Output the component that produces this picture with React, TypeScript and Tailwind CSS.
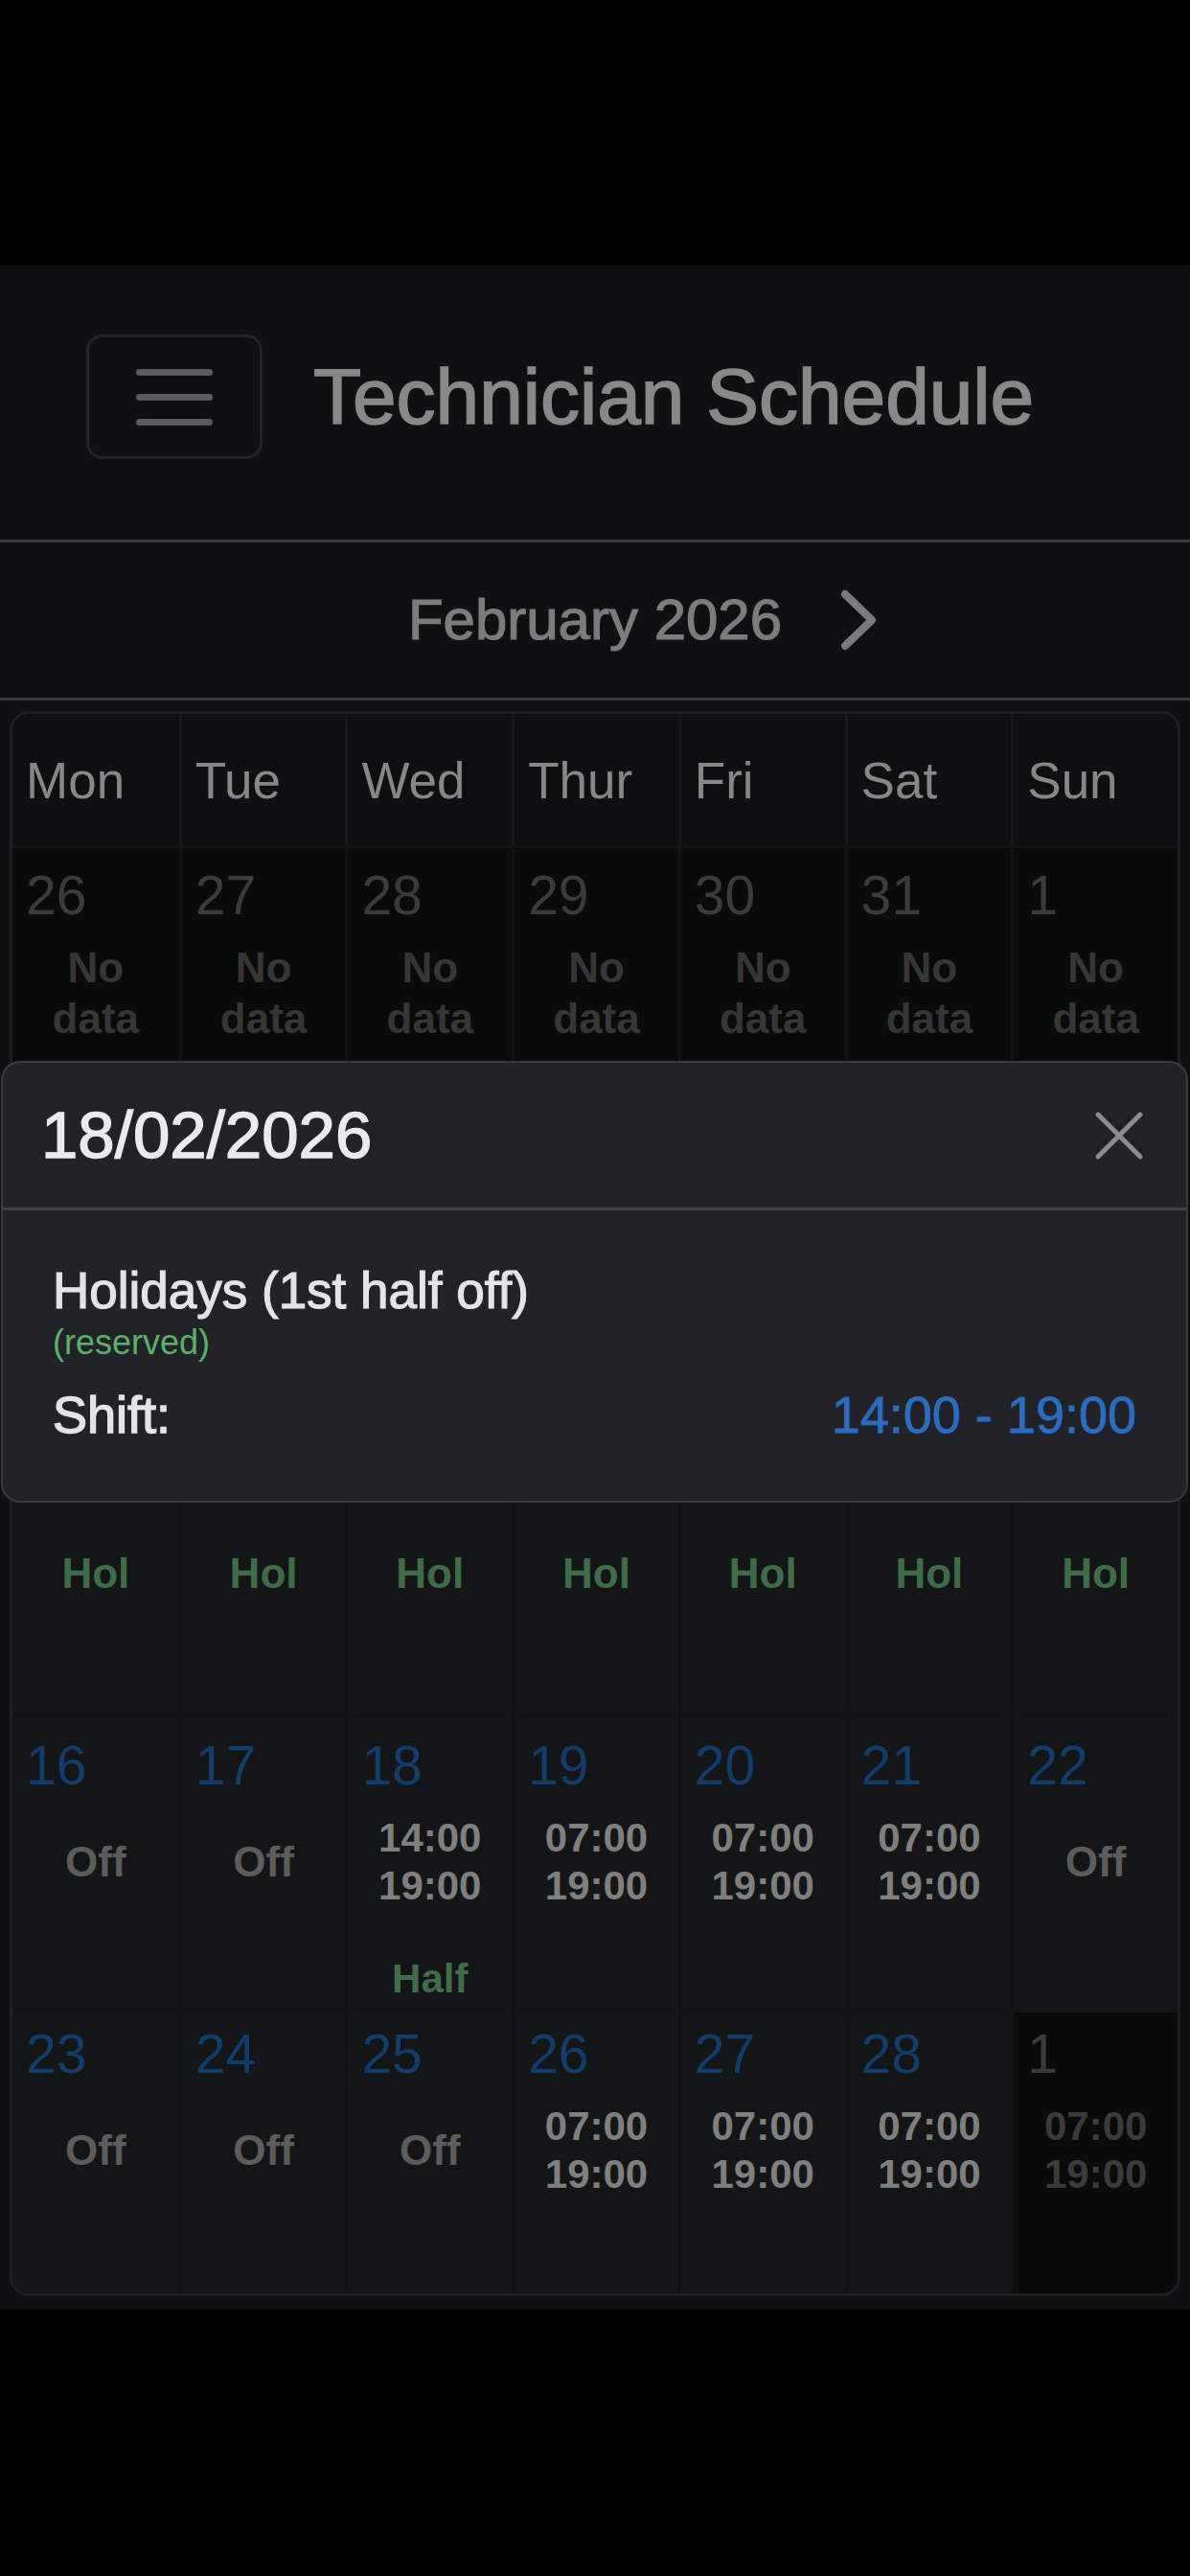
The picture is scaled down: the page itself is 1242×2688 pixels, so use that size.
import clsx from 'clsx';

type Kind = 'nodata' | 'off' | 'hol' | 'time';

interface Cell {
  day: number;
  out?: boolean;
  kind: Kind;
  start?: string;
  end?: string;
  half?: boolean;
}

interface Week {
  h: string;
  pt: string;
  cells: Cell[];
}

const dayNames = ['Mon', 'Tue', 'Wed', 'Thur', 'Fri', 'Sat', 'Sun'];

const day = (d: number, start = '07:00', end = '19:00'): Cell => ({ day: d, kind: 'time', start, end });

const weeks: Week[] = [
  {
    h: 'h-[233px]',
    pt: 'pt-[16px]',
    cells: [26, 27, 28, 29, 30, 31, 1].map((d) => ({ day: d, out: true, kind: 'nodata' as Kind })),
  },
  {
    h: 'h-[374px]',
    pt: 'pt-[16px]',
    cells: [day(2), day(3), day(4), day(5), day(6), { day: 7, kind: 'off' }, { day: 8, kind: 'off' }],
  },
  {
    h: 'h-[299px]',
    pt: 'pt-[16px]',
    cells: [9, 10, 11, 12, 13, 14, 15].map((d) => ({ day: d, kind: 'hol' as Kind })),
  },
  {
    h: 'h-[309px]',
    pt: 'pt-[18px]',
    cells: [
      { day: 16, kind: 'off' },
      { day: 17, kind: 'off' },
      { ...day(18, '14:00'), half: true },
      day(19),
      day(20),
      day(21),
      { day: 22, kind: 'off' },
    ],
  },
  {
    h: 'h-[296px]',
    pt: 'pt-[10px]',
    cells: [
      { day: 23, kind: 'off' },
      { day: 24, kind: 'off' },
      { day: 25, kind: 'off' },
      day(26),
      day(27),
      day(28),
      { ...day(1), out: true },
    ],
  },
];

function DayCell({ cell, first, pt }: { cell: Cell; first: boolean; pt: string }) {
  return (
    <div
      className={clsx(
        'flex flex-col px-[14px]',
        pt,
        !first && 'border-l-[3px] border-[#101113]',
        cell.out ? 'bg-[#090a0a]' : 'bg-[#141517]'
      )}
    >
      <div className={clsx('text-[57px] leading-[66px]', cell.out ? 'text-[#3b3b3b]' : 'text-[#123c6a]')}>
        {cell.day}
      </div>

      {cell.kind === 'nodata' && (
        <div className="mt-[16px] text-center text-[44px] leading-[53px] font-bold text-[#363636]">No data</div>
      )}

      {cell.kind !== 'nodata' && (
        <div className="mt-[18px] flex h-[100px] flex-col items-center justify-center font-bold">
          {cell.kind === 'time' && (
            <div className={clsx('text-center text-[42px] leading-[50px]', cell.out ? 'text-[#3b3b3b]' : 'text-[#7f7f7f]')}>
              <div>{cell.start}</div>
              <div>{cell.end}</div>
            </div>
          )}
          {cell.kind === 'off' && <div className="text-[44px] leading-[50px] text-[#5c5c5c]">Off</div>}
          {cell.kind === 'hol' && <div className="text-[44px] leading-[50px] text-[#3f6c48]">Hol</div>}
        </div>
      )}

      {cell.half && (
        <div className="mt-[47px] text-center text-[42px] leading-[50px] font-bold text-[#3f6d49]">Half</div>
      )}
    </div>
  );
}

function Chevron({ hidden }: { hidden?: boolean }) {
  return (
    <svg width="40" height="66" viewBox="0 0 40 66" className={clsx('shrink-0', hidden && 'invisible')}>
      <path d="M6 6 L34 33 L6 60" fill="none" stroke="#7a7a7c" strokeWidth="8" strokeLinecap="round" strokeLinejoin="round" />
    </svg>
  );
}

export default function App() {
  return (
    <div className="relative min-h-[2688px] bg-black font-['Liberation_Sans',Arial,sans-serif]">
      <div className="h-[277px] bg-black" />

      <div className="bg-[#0f1012] pb-[14px]">
        {/* navbar */}
        <header className="flex items-center border-b-[3px] border-[#3a3b3d] pt-[72px] pb-[84px] pl-[90px]">
          <button className="flex h-[130px] w-[184px] flex-col items-center justify-center gap-[19px] rounded-[17px] border-[3px] border-[#232426]">
            <span className="h-[7px] w-[80px] rounded-full bg-[#5a5a5c]" />
            <span className="h-[7px] w-[80px] rounded-full bg-[#5a5a5c]" />
            <span className="h-[7px] w-[80px] rounded-full bg-[#5a5a5c]" />
          </button>
          <h1 className="ml-[53px] text-[82px] leading-[98px] text-[#888888] [-webkit-text-stroke:1.6px_currentColor]">
            Technician Schedule
          </h1>
        </header>

        {/* month switcher */}
        <div className="flex h-[165px] items-center justify-center gap-[60px] border-b-[3px] border-[#3a3b3d]">
          <Chevron hidden />
          <div className="text-[60px] leading-[72px] text-[#7c7c7c] [-webkit-text-stroke:1.2px_currentColor]">
            February 2026
          </div>
          <Chevron />
        </div>

        {/* calendar */}
        <div className="mx-[10px] mt-[11px] overflow-hidden rounded-[20px] border-[3px] border-[#1d1e20] bg-[#0e0f11]">
          <div className="grid h-[137px] grid-cols-7">
            {dayNames.map((n, i) => (
              <div
                key={n}
                className={clsx(
                  'flex items-center pt-[2px] pl-[14px] text-[53px] text-[#878787]',
                  i > 0 && 'border-l-[3px] border-[#17181a]'
                )}
              >
                {n}
              </div>
            ))}
          </div>

          {weeks.map((w, wi) => (
            <div key={wi} className={clsx('grid grid-cols-7 border-t-[3px] border-[#121315]', w.h)}>
              {w.cells.map((c, ci) => (
                <DayCell key={ci} cell={c} first={ci === 0} pt={w.pt} />
              ))}
            </div>
          ))}
        </div>
      </div>

      {/* day details modal */}
      <div className="absolute top-[1107px] right-[2px] left-[1px] rounded-[20px] border-2 border-[#393b3f] bg-[#212328]">
        <div className="flex h-[154px] items-center justify-between border-b-[3px] border-[#3f4246] pr-[42px] pl-[40px]">
          <div className="text-[69px] leading-[80px] text-[#ebebed] [-webkit-text-stroke:1.4px_currentColor]">18/02/2026</div>
          <button>
            <svg width="56" height="56" viewBox="0 0 56 56">
              <path d="M6 6 L50 50 M50 6 L6 50" stroke="#8c8d90" strokeWidth="5" strokeLinecap="round" />
            </svg>
          </button>
        </div>
        <div className="px-[52px] pt-[52px] pb-[57px]">
          <div className="text-[53px] leading-[64px] text-[#e4e4e6] [-webkit-text-stroke:1.2px_currentColor]">
            Holidays (1st half off)
          </div>
          <div className="text-[36px] leading-[43px] text-[#5cb06a]">(reserved)</div>
          <div className="mt-[22px] flex items-center justify-between text-[54px] leading-[65px]">
            <span className="text-[#e4e4e6] [-webkit-text-stroke:1.4px_currentColor]">Shift:</span>
            <span className="text-[#2b6cc0] [-webkit-text-stroke:0.8px_currentColor]">14:00 - 19:00</span>
          </div>
        </div>
      </div>
    </div>
  );
}
